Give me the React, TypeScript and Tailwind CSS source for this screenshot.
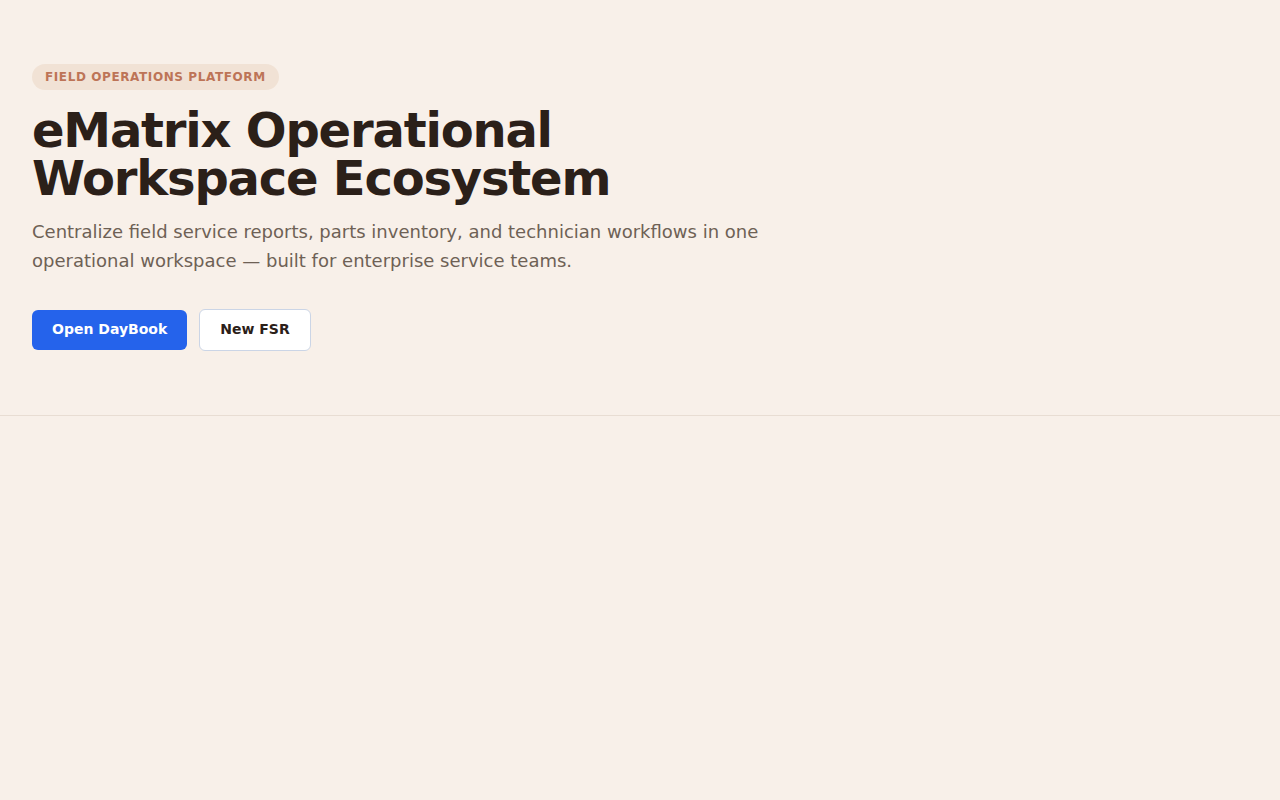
import React from 'react';

const font = { fontFamily: '"DejaVu Sans", sans-serif' };

export default function App() {
  return (
    <div className="min-h-screen w-full bg-[#f8f0e9]" style={font}>
      <section className="border-b border-[#e8ddd3] px-8 pt-16 pb-16">
        <span className="inline-flex items-center rounded-full bg-[#f1e2d5] px-[13px] py-[5px] text-xs font-bold uppercase tracking-[0.05em] text-[#bd7457]">
          Field Operations Platform
        </span>
        <h1 className="mt-4 text-5xl leading-[1.01] font-bold tracking-tight text-[#2b2019]">
          eMatrix Operational
          <br />
          Workspace Ecosystem
        </h1>
        <p className="mt-[14px] max-w-3xl text-lg leading-relaxed text-[#6e6155]">
          Centralize field service reports, parts inventory, and technician workflows in one
          operational workspace — built for enterprise service teams.
        </p>
        <div className="mt-[34px] flex flex-wrap items-center gap-3">
          <button
            type="button"
            className="h-10 rounded-md bg-[#2563eb] px-5 pb-[3px] text-sm font-bold text-white"
          >
            Open DayBook
          </button>
          <button
            type="button"
            className="h-[42px] rounded-md border border-[#cbd5e6] bg-white px-5 pb-[3px] text-sm font-bold text-[#2b2019]"
          >
            New FSR
          </button>
        </div>
      </section>
    </div>
  );
}
